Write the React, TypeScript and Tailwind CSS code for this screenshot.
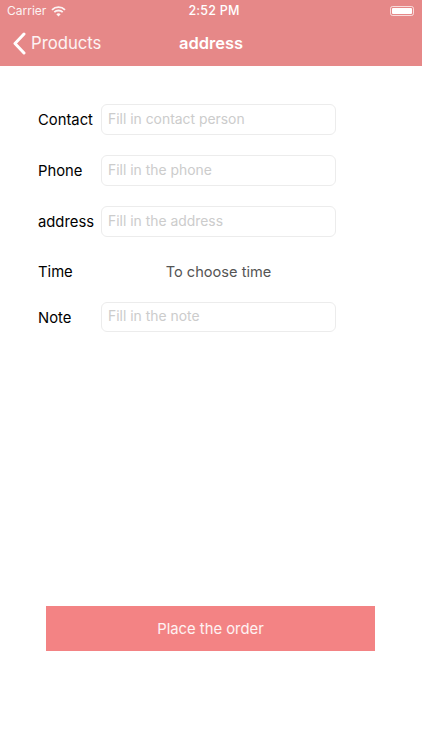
const font = "font-['Inter','Liberation_Sans',sans-serif]";

function Field({ label, placeholder, short }: { label: string; placeholder: string; short?: boolean }) {
  return (
    <div className={short ? "flex h-[30px] items-center" : "flex h-[31px] items-center"}>
      <span className="w-[63px] pt-[2px] text-[14.8px] text-black">{label}</span>
      <input
        readOnly
        placeholder={placeholder}
        className="h-full w-[235px] rounded-[6px] border border-[#ececec] pb-[2px] pl-[6px] pr-[7px] text-[13.9px] outline-none placeholder:text-[#cccccc]"
      />
    </div>
  );
}

export default function App() {
  return (
    <div className={`${font} flex h-[750px] w-[422px] flex-col bg-white`}>
      <header className="h-[66px] bg-[#e68888] text-white">
        <div className="flex h-[22px] items-center justify-between pl-[7px] pr-[8px]">
          <div className="flex w-[140px] items-center gap-[5px] text-[12px] opacity-90">
            Carrier
            <svg width="15" height="11" viewBox="0 0 15 11" fill="none" stroke="white" strokeWidth="1.8">
              <path d="M1 3.8a9.200 9.200 0 0 1 13 0" />
              <path d="M3.300 6.200a6 6 0 0 1 8.400 0" />
              <path d="M7.500 10.500 5.300 8.300a3.100 3.100 0 0 1 4.400 0z" fill="white" stroke="none" />
            </svg>
          </div>
          <span className="ml-[7px] text-[12.5px] font-medium tracking-[0.2px]">2:52 PM</span>
          <div className="flex w-[140px] justify-end">
            <div className="flex h-[10px] w-[24px] items-center rounded-[2.5px] border border-white/70 p-[1px]">
              <div className="h-full w-full rounded-[1px] bg-white" />
            </div>
          </div>
        </div>
        <div className="relative flex h-[43px] items-center justify-center">
          <div className="absolute left-[13px] flex items-center gap-[5px] text-[16.7px] text-white/90">
            <svg width="13" height="23" viewBox="0 0 13 23" fill="none" stroke="white" strokeWidth="3" strokeLinecap="round" strokeLinejoin="round">
              <path d="M11 2 2 11.500 11 21" />
            </svg>
            Products
          </div>
          <span className="text-[16.5px] font-semibold">address</span>
        </div>
      </header>

      <main className="flex flex-col pl-[38px] pt-[38px]">
        <div className="flex flex-col gap-[20px]">
          <Field label="Contact" placeholder="Fill in contact person" />
          <Field label="Phone" placeholder="Fill in the phone" />
          <Field label="address" placeholder="Fill in the address" />
          <div className="flex h-[31px] items-center">
            <span className="w-[63px] text-[14.8px] text-black">Time</span>
            <span className="w-[235px] text-center text-[14.6px] text-[#555555]">To choose time</span>
          </div>
        </div>
        <div className="mt-[14px]">
          <Field label="Note" placeholder="Fill in the note" short />
        </div>
      </main>

      <button className="ml-[46px] mt-[274px] h-[45px] w-[329px] bg-[#f38384] pt-[2px] text-[14.8px] text-white/90">
        Place the order
      </button>
    </div>
  );
}
